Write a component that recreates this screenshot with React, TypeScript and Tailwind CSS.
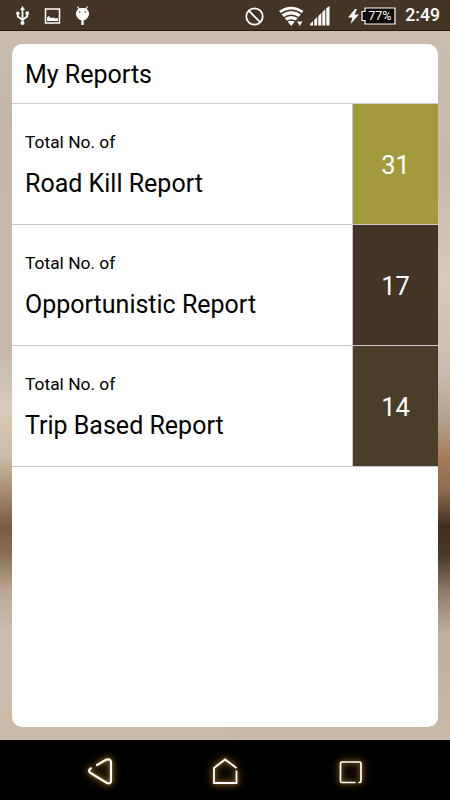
import React from "react";

type Report = {
  name: string;
  total: number;
  color: string;
};

const reports: Report[] = [
  { name: "Road Kill Report", total: 31, color: "bg-[#a39a3d]" },
  { name: "Opportunistic Report", total: 17, color: "bg-[#433426]" },
  { name: "Trip Based Report", total: 14, color: "bg-[#4a3e29]" },
];

const StatusBar = () => (
  <header className="flex h-[31px] shrink-0 items-center justify-between border-b border-[#2b1a0c] bg-[#433426] pt-0.5 text-white">
    <div className="flex items-center pl-4">
      {/* usb */}
      <svg width="14" height="20" viewBox="0 0 14 20" fill="none" stroke="white" strokeWidth="1.8">
        <path d="M6.5 3v13M1.8 7v3.5l4.7 3.3 4.7-3.3V7" />
        <path d="M6.5 0 9 4H4z" fill="white" stroke="none" />
        <circle cx="6.5" cy="17" r="2" fill="white" stroke="none" />
        <circle cx="1.8" cy="7.2" r="1.7" fill="white" stroke="none" />
        <path d="M9.6 5.5h3.2v3.2H9.6z" fill="white" stroke="none" />
      </svg>
      {/* screenshot */}
      <svg className="ml-3.5" width="17" height="16" viewBox="0 0 17 16">
        <path d="M1.5 1h14v14h-14z" fill="none" stroke="white" strokeWidth="1.5" />
        <path d="M3 13V9.5L5 8l2 2.2 2-.8 2.5 1 2.5-.3V13z" fill="white" />
      </svg>
      {/* android debug */}
      <svg className="ml-3.5" width="15" height="20" viewBox="0 0 15 20" fill="white">
        <path d="m2.5.5 2 3M12.5.5l-2 3" stroke="white" strokeWidth="1.3" />
        <path d="M1 7.5C1 4 4 2 7.5 2S14 4 14 7.5 11 14.500 7.500 14.500 1 11 1 7.500z" />
        <path d="M6.300 14h2.400v5H6.300z" />
        <circle cx="4.700" cy="6" r=".8" fill="#433426" />
        <circle cx="10.300" cy="6" r=".8" fill="#433426" />
      </svg>
    </div>

    <div className="flex items-center pr-2.5">
      {/* blocked */}
      <svg width="19" height="19" viewBox="0 0 19 19" fill="none" stroke="white" strokeWidth="1.8">
        <circle cx="9.500" cy="9.500" r="8.200" />
        <path d="m3.700 3.700 11.600 11.600" />
      </svg>
      {/* wifi */}
      <svg className="ml-[15px]" width="25" height="21" viewBox="0 0 25 21">
        <path d="M0 5Q12 -3.500 24.500 5L12.200 20z" fill="white" />
        <path
          d="M1.500 8.200Q12.200 .5 23 8.200M4.500 12Q12.200 6.500 20 12M7.500 15.700Q12.200 12.500 17 15.700"
          fill="none"
          stroke="#433426"
          strokeWidth="1.500"
        />
        <path d="M16.500 14H25v7h-8.500z" fill="#433426" />
        <path d="M18 15.500h5.500L20.800 20z" fill="white" />
      </svg>
      {/* signal */}
      <svg className="ml-[6px]" width="20" height="20" viewBox="0 0 20 20" fill="white">
        <path d="M0 19.500v-1.500l3-3v4.500zM4.200 19.500v-5.500l3-3v8.500zM8.300 19.500v-9.500l3-3v12.500zM12.300 19.500V6.200l3-3v16.300zM16.300 19.500V2.300L19.500 0v19.500z" />
      </svg>
      {/* charging */}
      <svg className="ml-[18px]" width="12" height="15" viewBox="0 0 12 15" fill="white">
        <path d="M7 0 0 8.500h4.500L2.500 15 11 5.500H6.500L9 0z" />
      </svg>
      <div className="relative ml-px h-[18px] w-[35px]">
        <svg width="35" height="18" viewBox="0 0 35 18">
          <path
            d="M4 1h30v16H4v-3.500H1v-9h3z"
            fill="#0c0805"
            stroke="white"
            strokeWidth="1.200"
          />
        </svg>
        <span className="absolute inset-0 flex items-center justify-center pl-0.5 text-[12.5px]">
          77%
        </span>
      </div>
      <span className="ml-[9px] text-[17.6px] leading-none font-medium">2:49</span>
    </div>
  </header>
);

const ReportRow = ({ name, total, color }: Report) => (
  <li className="flex h-[121px] border-b border-[#c9c7c8]">
    <div className="flex flex-1 flex-col pt-[26px] pl-[13px]">
      <span className="text-[17.4px] leading-6">Total No. of</span>
      <span className="mt-[13px] text-[25px] leading-[34px]">{name}</span>
    </div>
    <div
      className={`flex w-[86px] items-center justify-center border-l border-[#c9c7c8] pt-[3px] text-[25.5px] text-white ${color}`}
    >
      {total}
    </div>
  </li>
);

const glow =
  "overflow-visible [filter:drop-shadow(0_0_2px_#a87620)_drop-shadow(0_0_4px_#7d581a)]";

const NavBar = () => (
  <nav className="flex h-[60px] shrink-0 items-center justify-between bg-black px-[87px] pt-[3px]">
    <svg className={glow} width="26" height="28" viewBox="0 0 26 28" fill="none" stroke="white" strokeWidth="2.200" strokeLinecap="round">
      <path d="m10 7 9-5.300Q24 .5 24 4.500v18q0 4-4 2.500L3.500 15Q.5 12.500 4 10.300" />
    </svg>
    <svg className={glow} width="26" height="28" viewBox="0 0 26 28" fill="none" stroke="white" strokeWidth="1.800">
      <path d="M24.500 10 13 1.500 2 10v15h22.500V12.500" />
    </svg>
    <svg className={glow} width="26" height="28" viewBox="0 0 26 28" fill="none" stroke="white" strokeWidth="1.700" strokeLinecap="round">
      <path d="M18 24.500H5q-1.500 0-1.500-1.500V5.500Q3.500 4 5 4h17.500Q24 4 24 5.500V23q0 1.500-2 1.500" />
    </svg>
  </nav>
);

const App = () => {
  return (
    <div className="flex h-[800px] w-[450px] flex-col overflow-hidden font-[Roboto,sans-serif] text-black">
      <StatusBar />
      <main className="flex flex-1 bg-[linear-gradient(#cabdb0,#c4b5a4_15%,#c9b9aa_30%,#c7b8aa_45%,#d8cbb9_53%,#cbbba7_60%,#a58c73_65%,#785a41_70%,#8a7058_74%,#bba894_79%,#cdbdad_85%,#cbbba9),linear-gradient(#cabdb0,#c7b9ab_20%,#d7cab9_35%,#c9bcae_48%,#b3a08c_55%,#a77d5a_60%,#8f694b_65%,#402d1e_70%,#4a3827_74%,#8e7b68_79%,#c1af9e_85%,#cab9a6)] bg-[size:50%_100%] bg-[position:left,right] bg-no-repeat px-3 pt-[13px] pb-[13px]">
        <section className="flex-1 overflow-hidden rounded-[10px] bg-white">
          <h1 className="flex h-[60px] items-center border-b border-[#cfcfcf] pt-[3px] pl-[13px] text-[25px]">
            My Reports
          </h1>
          <ul>
            {reports.map((report) => (
              <ReportRow key={report.name} {...report} />
            ))}
          </ul>
        </section>
      </main>
      <NavBar />
    </div>
  );
};

export default App;
